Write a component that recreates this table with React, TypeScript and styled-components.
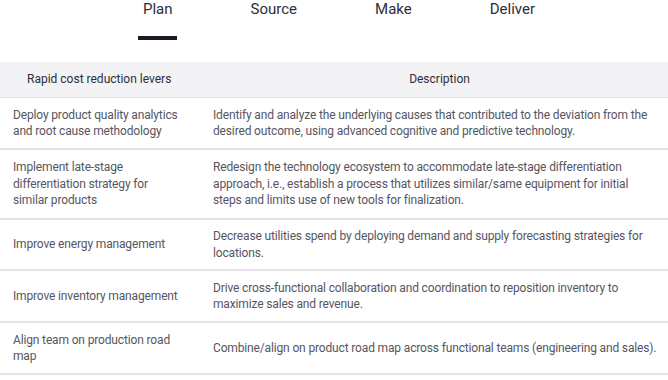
import styled, { createGlobalStyle } from 'styled-components';

const Global = createGlobalStyle`
    body {
        margin: 0;
        background: #fff;
        font-family: Roboto, 'Liberation Sans', sans-serif;
    }
`;

const Page = styled.div`
    width: 668px;
    height: 380px;
    overflow: hidden;
`;

const Tabs = styled.div`
    display: flex;
    gap: 78px;
    padding-left: 143px;
    height: 62px;
`;

const Tab = styled.div<{ $active?: boolean }>`
    font-size: 15px;
    line-height: 18px;
    color: #2e2e38;

    &:after {
        content: '';
        display: ${(p) => (p.$active ? 'block' : 'none')};
        height: 4px;
        background: #1a1a24;
        margin: 18px -4px 0 -5px;
    }
`;

const Table = styled.div`
    display: grid;
    grid-template-columns: 199px 1fr;
    font-size: 12px;
    letter-spacing: -0.15px;
    line-height: 16.5px;
    color: #56565f;
`;

const HeadCell = styled.div<{ $center?: boolean }>`
    background: #f3f3f5;
    height: 35px;
    display: flex;
    align-items: center;
    justify-content: ${(p) => (p.$center ? 'center' : 'flex-start')};
    padding: 0 14px 0 ${(p) => (p.$center ? 26 : 27)}px;
    color: #2e2e38;
    font-size: 12px;
    letter-spacing: 0;
    border-bottom: 1px solid #e2e2e6;
`;

const Cell = styled.div<{ $h: number; $side?: boolean }>`
    height: ${(p) => p.$h}px;
    box-sizing: border-box;
    display: flex;
    align-items: center;
    padding: 0 ${(p) => (p.$side ? 14 : 10)}px 0 ${(p) => (p.$side ? 13 : 14)}px;
    border-bottom: 2px solid #e4e4e8;
`;

const rows = [
    {
        lever: 'Deploy product quality analytics and root cause methodology',
        desc: 'Identify and analyze the underlying causes that contributed to the deviation from the desired outcome, using advanced cognitive and predictive technology.',
        h: 52,
    },
    {
        lever: 'Implement late-stage differentiation strategy for similar products',
        desc: 'Redesign the technology ecosystem to accommodate late-stage differentiation approach, i.e., establish a process that utilizes similar/same equipment for initial steps and limits use of new tools for finalization.',
        h: 70,
    },
    {
        lever: 'Improve energy management',
        desc: 'Decrease utilities spend by deploying demand and supply forecasting strategies for locations.',
        h: 51,
    },
    {
        lever: 'Improve inventory management',
        desc: 'Drive cross-functional collaboration and coordination to reposition inventory to maximize sales and revenue.',
        h: 52,
    },
    {
        lever: 'Align team on production road map',
        desc: 'Combine/align on product road map across functional teams (engineering and sales).',
        h: 52,
    },
];

export default function App() {
    return (
        <Page>
            <Global />
            <Tabs>
                <Tab $active>Plan</Tab>
                <Tab>Source</Tab>
                <Tab>Make</Tab>
                <Tab>Deliver</Tab>
            </Tabs>
            <Table>
                <HeadCell>Rapid cost reduction levers</HeadCell>
                <HeadCell $center>Description</HeadCell>
                {rows.map((r) => (
                    <>
                        <Cell $h={r.h} $side>{r.lever}</Cell>
                        <Cell $h={r.h}>{r.desc}</Cell>
                    </>
                ))}
            </Table>
        </Page>
    );
}
